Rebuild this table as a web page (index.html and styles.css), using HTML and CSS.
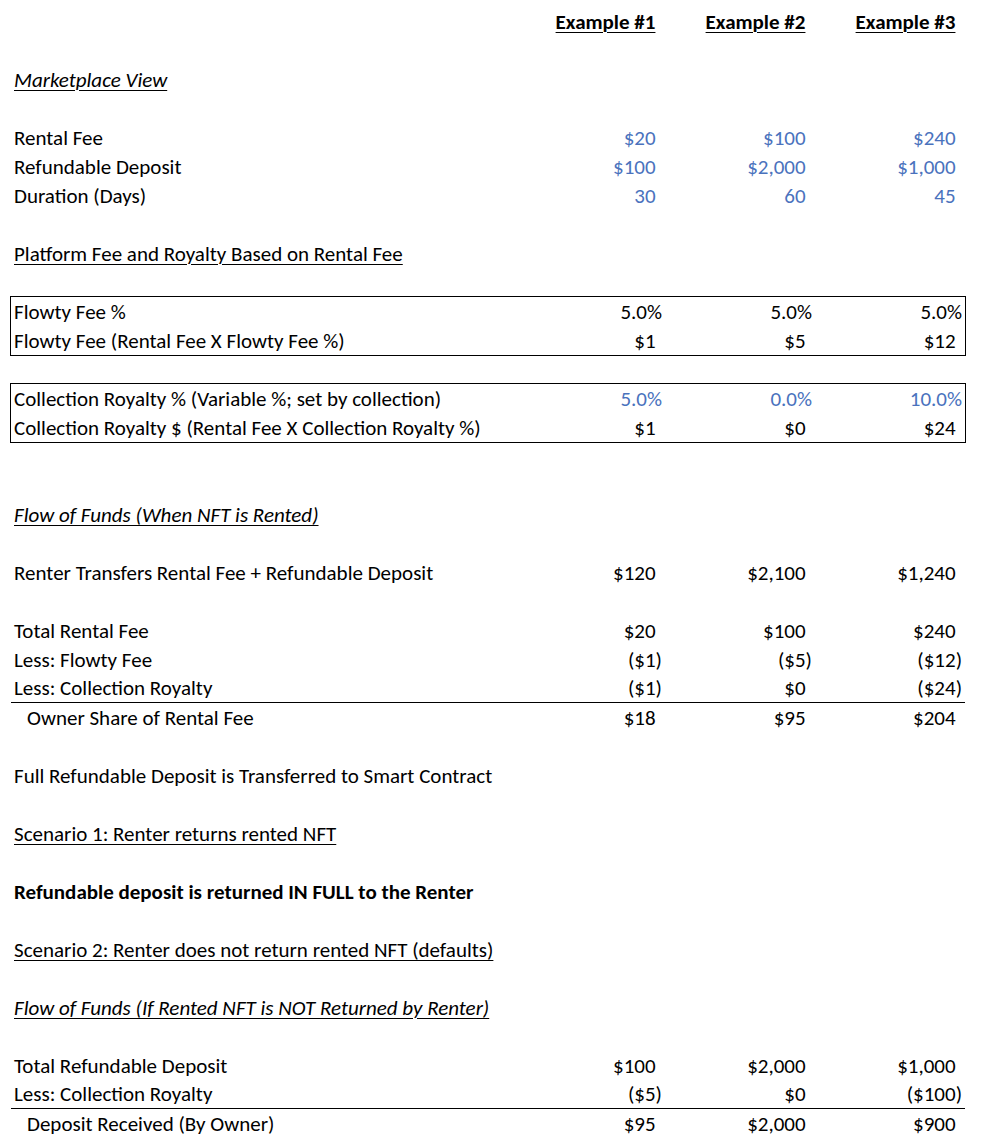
FILE: index.html
```html
<!DOCTYPE html>
<html>
<head>
<meta charset="utf-8">
<link rel="stylesheet" href="styles.css">
</head>
<body>
<div class="sheet">
  <div class="row"><div class="lbl"></div><div class="num hdr"><u>Example #1</u><i class="p">)</i></div><div class="num hdr"><u>Example #2</u><i class="p">)</i></div><div class="num hdr"><u>Example #3</u><i class="p">)</i></div></div>
  <div class="row"></div>
  <div class="row"><div class="lbl title"><span>Marketplace View</span></div></div>
  <div class="row"></div>
  <div class="row"><div class="lbl">Rental Fee</div><div class="num blue">$20<i class="p">)</i></div><div class="num blue">$100<i class="p">)</i></div><div class="num blue">$240<i class="p">)</i></div></div>
  <div class="row"><div class="lbl">Refundable Deposit</div><div class="num blue">$100<i class="p">)</i></div><div class="num blue">$2,000<i class="p">)</i></div><div class="num blue">$1,000<i class="p">)</i></div></div>
  <div class="row"><div class="lbl">Duration (Days)</div><div class="num blue">30<i class="p">)</i></div><div class="num blue">60<i class="p">)</i></div><div class="num blue">45<i class="p">)</i></div></div>
  <div class="row"></div>
  <div class="row"><div class="lbl section"><span>Platform Fee and Royalty Based on Rental Fee</span></div></div>
  <div class="row"></div>
  <div class="box">
    <div class="row"><div class="lbl">Flowty Fee %</div><div class="num">5.0%</div><div class="num">5.0%</div><div class="num">5.0%</div></div>
    <div class="row"><div class="lbl">Flowty Fee (Rental Fee X Flowty Fee %)</div><div class="num">$1<i class="p">)</i></div><div class="num">$5<i class="p">)</i></div><div class="num">$12<i class="p">)</i></div></div>
  </div>
  <div class="row"></div>
  <div class="box">
    <div class="row"><div class="lbl">Collection Royalty % (Variable %; set by collection)</div><div class="num blue">5.0%</div><div class="num blue">0.0%</div><div class="num blue">10.0%</div></div>
    <div class="row"><div class="lbl">Collection Royalty $ (Rental Fee X Collection Royalty %)</div><div class="num">$1<i class="p">)</i></div><div class="num">$0<i class="p">)</i></div><div class="num">$24<i class="p">)</i></div></div>
  </div>
  <div class="row"></div>
  <div class="row"></div>
  <div class="row"><div class="lbl title"><span>Flow of Funds (When NFT is Rented)</span></div></div>
  <div class="row"></div>
  <div class="row"><div class="lbl">Renter Transfers Rental Fee + Refundable Deposit</div><div class="num">$120<i class="p">)</i></div><div class="num">$2,100<i class="p">)</i></div><div class="num">$1,240<i class="p">)</i></div></div>
  <div class="row"></div>
  <div class="row"><div class="lbl">Total Rental Fee</div><div class="num">$20<i class="p">)</i></div><div class="num">$100<i class="p">)</i></div><div class="num">$240<i class="p">)</i></div></div>
  <div class="row"><div class="lbl">Less: Flowty Fee</div><div class="num">($1)</div><div class="num">($5)</div><div class="num">($12)</div></div>
  <div class="row rule"><div class="lbl">Less: Collection Royalty</div><div class="num">($1)</div><div class="num">$0<i class="p">)</i></div><div class="num">($24)</div></div>
  <div class="row"><div class="lbl indent">Owner Share of Rental Fee</div><div class="num">$18<i class="p">)</i></div><div class="num">$95<i class="p">)</i></div><div class="num">$204<i class="p">)</i></div></div>
  <div class="row"></div>
  <div class="row"><div class="lbl">Full Refundable Deposit is Transferred to Smart Contract</div></div>
  <div class="row"></div>
  <div class="row"><div class="lbl section"><span>Scenario 1: Renter returns rented NFT</span></div></div>
  <div class="row"></div>
  <div class="row"><div class="lbl strong">Refundable deposit is returned IN FULL to the Renter</div></div>
  <div class="row"></div>
  <div class="row"><div class="lbl section"><span>Scenario 2: Renter does not return rented NFT (defaults)</span></div></div>
  <div class="row"></div>
  <div class="row"><div class="lbl title"><span>Flow of Funds (If Rented NFT is NOT Returned by Renter)</span></div></div>
  <div class="row"></div>
  <div class="row"><div class="lbl">Total Refundable Deposit</div><div class="num">$100<i class="p">)</i></div><div class="num">$2,000<i class="p">)</i></div><div class="num">$1,000<i class="p">)</i></div></div>
  <div class="row rule"><div class="lbl">Less: Collection Royalty</div><div class="num">($5)</div><div class="num">$0<i class="p">)</i></div><div class="num">($100)</div></div>
  <div class="row"><div class="lbl indent">Deposit Received (By Owner)</div><div class="num">$95<i class="p">)</i></div><div class="num">$2,000<i class="p">)</i></div><div class="num">$900<i class="p">)</i></div></div>
</div>
</body>
</html>
```
FILE: styles.css
```css
html, body {
  margin: 0;
  padding: 0;
  background: #ffffff;
}
body {
  font-family: Carlito, Lato, "Open Sans", sans-serif;
  font-size: 21px;
  color: #000000;
}
.sheet {
  width: 954px;
  margin-left: 11px;
  padding-top: 7px;
}
.row {
  box-sizing: border-box;
  height: 29px;
  display: grid;
  grid-template-columns: 504px 150px 150px 150px;
  align-items: center;
  white-space: nowrap;
}
.lbl {
  padding-left: 3px;
}
.num {
  text-align: right;
  padding-right: 3px;
}
.p {
  visibility: hidden;
  font-style: normal;
}
.blue {
  color: #4a72bd;
}
.hdr {
  font-weight: bold;
}
.hdr u {
  text-decoration: underline;
  text-decoration-thickness: 1px;
  text-underline-offset: 3px;
}
.title span {
  font-style: italic;
  text-decoration: underline;
  text-decoration-thickness: 1px;
  text-underline-offset: 3px;
}
.section span {
  text-decoration: underline;
  text-decoration-thickness: 1px;
  text-underline-offset: 3px;
}
.strong {
  font-weight: bold;
}
.indent {
  padding-left: 16px;
}
.box {
  border: 1px solid #000000;
  margin: -1px -1px -1px -1px;
}
.rule {
  border-bottom: 1px solid #000000;
}
```
